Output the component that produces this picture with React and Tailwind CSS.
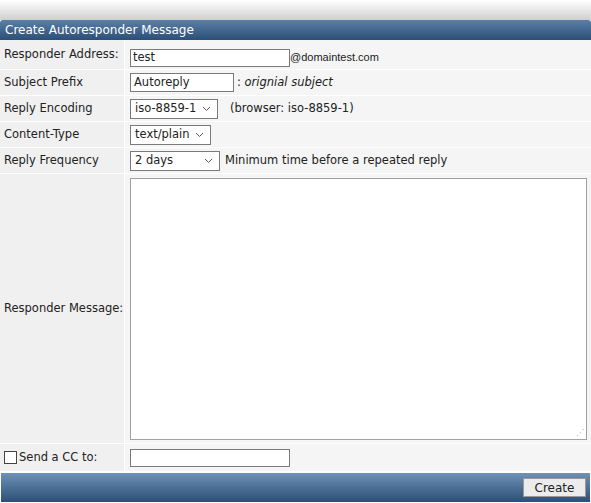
const F = { fontFamily: '"DejaVu Sans", Verdana, sans-serif' };
const Chev = () => (
  <svg width="9" height="6" viewBox="0 0 9 6" className="ml-auto"><path d="M1 1l3.5 3.5L8 1" fill="none" stroke="#555" strokeWidth="1"/></svg>
);
const Sel = ({ w, v }) => (
  <div className={`flex items-center h-[20px] border border-[#7a7a7a] bg-white px-[4px] pr-[6px] ${w}`}>
    <span>{v}</span><Chev />
  </div>
);
const Row = ({ label, h = "h-[26px]", children, labelClass = "items-center" }) => (
  <div className={`flex ${h} border-b border-white`}>
    <div className={`w-[125px] bg-[#f0f0f0] border-r border-white flex ${labelClass} pl-[4px]`}>{label}</div>
    <div className="flex-1 bg-[#f5f5f5] flex items-center pl-[5px]">{children}</div>
  </div>
);
export default function App() {
  return (
    <div className="w-[591px] h-[503px] bg-white text-[11.5px] text-[#222]" style={F}>
      <div className="h-[20px] bg-gradient-to-b from-white to-[#cfcfcf]" />
      <div className="h-[20px] rounded-t-[3px] bg-gradient-to-b from-[#5b7fa6] to-[#2c4f78] text-white flex items-center pl-[5px] text-[12px]">Create Autoresponder Message</div>
      <Row label="Responder Address:" h="h-[30px]">
        <div className="w-[160px] h-[18px] border border-[#7a7a7a] bg-white px-[2px] flex items-center mt-[6px]">test</div>
        <span className="text-[11px] mt-[6px]" style={{ fontFamily: '"Liberation Sans", Arial, sans-serif' }}>@domaintest.com</span>
      </Row>
      <Row label="Subject Prefix">
        <div className="w-[104px] h-[19px] border border-[#7a7a7a] bg-white px-[3px] flex items-center">Autoreply</div>
        <span className="ml-[3px]">: <i>orignial subject</i></span>
      </Row>
      <Row label="Reply Encoding">
        <Sel w="w-[88px]" v="iso-8859-1" />
        <span className="ml-[12px]">(browser: iso-8859-1)</span>
      </Row>
      <Row label="Content-Type">
        <Sel w="w-[81px]" v="text/plain" />
      </Row>
      <Row label="Reply Frequency">
        <Sel w="w-[90px]" v="2 days" />
        <span className="ml-[5px]">Minimum time before a repeated reply</span>
      </Row>
      <Row label="Responder Message:" h="h-[270px]">
        <div className="w-[457px] h-[262px] border border-[#a0a0a0] bg-white relative">
          <span className="absolute right-[2px] bottom-[0px] text-[8px] text-[#aaa]">⋰</span>
        </div>
      </Row>
      <Row label={<span className="flex items-center gap-[2px]"><span className="w-[13px] h-[13px] border border-[#444] bg-white inline-block" />Send a CC to:</span>} h="h-[28px]">
        <div className="w-[160px] h-[18px] border border-[#7a7a7a] bg-white" />
      </Row>
      <div className="h-[29px] mx-[1px] bg-gradient-to-b from-[#6f92b5] to-[#2c4f78] flex items-center justify-end pr-[4px] mt-[1px]">
        <div className="w-[63px] h-[19px] bg-[#ececec] border border-[#999] flex items-center justify-center text-[12px]">Create</div>
      </div>
    </div>
  );
}
